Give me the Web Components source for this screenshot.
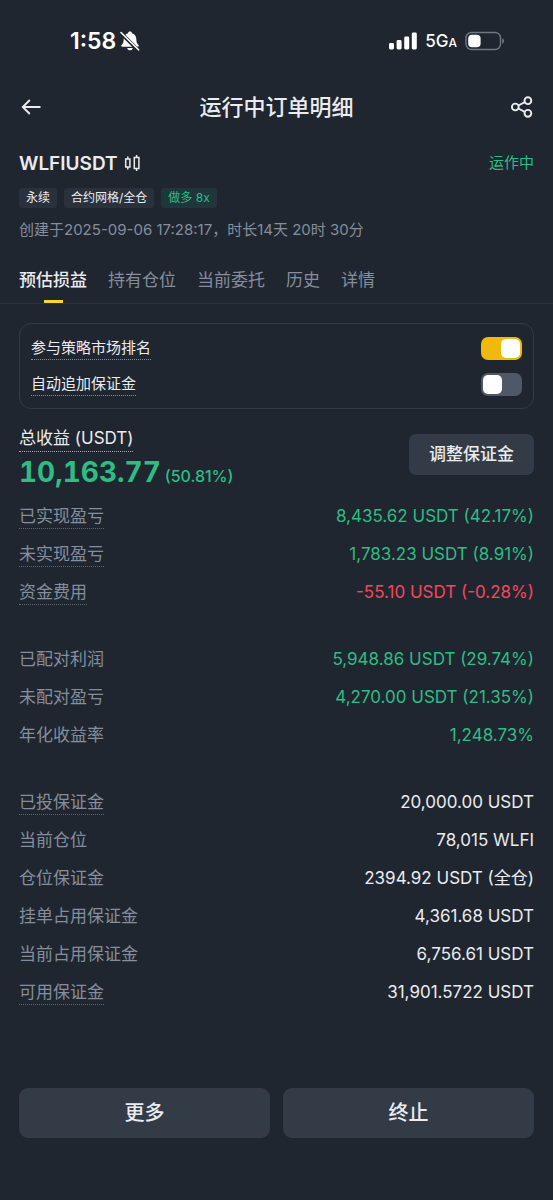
<!DOCTYPE html>
<html lang="zh-CN">
<head>
<meta charset="utf-8">
<meta name="viewport" content="width=device-width, initial-scale=1">
<title>运行中订单明细</title>
<style>
  body {
    margin: 0;
    background: #202630;
  }
</style>
</head>
<body>
<order-page></order-page>

<script>
class BaseElement extends HTMLElement {
  connectedCallback() {
    if (this.shadowRoot) return;
    this.shadow = this.attachShadow({ mode: 'open' });
    this.shadow.innerHTML = `<style>* { box-sizing: border-box; } ${this.css()}</style>${this.html()}`;
  }
}

class StatusBar extends BaseElement {
  html() {
    return `
      <div class="side clock">
        <span class="time">1:58</span>
        <svg width="20" height="20" viewBox="0 0 20 20" aria-hidden="true">
          <path d="M10 .6C8.900 .6 8.100 1.300 8 2.200C5.300 3 3.700 5.300 3.700 8C3.700 11.300 3 12.500 1.500 14C.9 14.700 1.200 15.800 2.300 15.800H17.700C18.800 15.800 19.100 14.700 18.500 14C17 12.500 16.300 11.300 16.300 8C16.300 5.300 14.700 3 12 2.200C11.900 1.300 11.100 .6 10 .6Z" fill="#fff"/>
          <path d="M7.200 17H12.800C12.500 18.500 11.400 19.300 10 19.300C8.600 19.300 7.500 18.500 7.200 17Z" fill="#fff"/>
          <path d="M.5 1.500L18 19" stroke="#202630" stroke-width="3.800"/>
          <path d="M1 1.500L18.700 18.900" stroke="#fff" stroke-width="1.500" stroke-linecap="round"/>
        </svg>
      </div>
      <div class="side">
        <svg width="28" height="18" viewBox="0 0 28 18" fill="#fff" aria-hidden="true">
          <rect x="0" y="11" width="5" height="6.500" rx="1.400"/>
          <rect x="7.600" y="8" width="5" height="9.500" rx="1.400"/>
          <rect x="15.200" y="4.500" width="5" height="13" rx="1.400"/>
          <rect x="22.800" y="0.500" width="5" height="17" rx="1.400"/>
        </svg>
        <span class="net">5G<small>A</small></span>
        <svg width="40" height="20" viewBox="0 0 40 20" aria-hidden="true">
          <rect x="1" y="1.500" width="34.500" height="17" rx="5.500" fill="none" stroke="#717780" stroke-width="1.400"/>
          <rect x="3.200" y="3.800" width="12.400" height="12.400" rx="3.800" fill="#fff"/>
          <path d="M37.200 7.200C39.600 8.300 39.600 11.700 37.200 12.800Z" fill="#717780"/>
        </svg>
      </div>`;
  }

  css() {
    return `
      :host {
        display: flex;
        justify-content: space-between;
        height: 82px;
        padding: 0 48px 0 70px;
        color: #fff;
      }
      .side { display: flex; align-items: center; gap: 8px; }
      .clock { gap: 4px; }
      .time { font-size: 23px; font-weight: 600; }
      .net { font-size: 17px; font-weight: 500; }
      small { font-size: 12px; }
    `;
  }
}

class PageHeader extends BaseElement {
  html() {
    return `
      <button aria-label="返回">
        <svg width="24" height="24" viewBox="0 0 24 24">
          <path d="M21.500 12H3.800M10.800 5L3.800 12L10.800 19" stroke-width="1.900"/>
        </svg>
      </button>
      <h1><slot></slot></h1>
      <button aria-label="分享">
        <svg width="24" height="24" viewBox="0 0 24 24">
          <g stroke-width="1.900">
            <circle cx="5.300" cy="12" r="3.400"/>
            <circle cx="17.900" cy="5.700" r="3.400"/>
            <circle cx="17.900" cy="18.300" r="3.400"/>
            <path d="M8.400 10.500L14.800 7.200M8.400 13.500L14.800 16.800"/>
          </g>
        </svg>
      </button>`;
  }

  css() {
    return `
      :host {
        display: flex;
        align-items: center;
        justify-content: space-between;
        height: 50px;
        padding: 0 19px;
      }
      h1 { margin: 0; font-size: 22px; font-weight: 500; line-height: 32px; }
      button {
        display: flex;
        padding: 0;
        border: 0;
        background: none;
        color: inherit;
      }
      svg { fill: none; stroke: currentColor; }
    `;
  }
}

class OrderTag extends BaseElement {
  html() {
    return `<slot></slot>`;
  }

  css() {
    return `
      :host {
        display: block;
        padding: 0 7px;
        border-radius: 3px;
        background: #29313d;
        font-size: 12px;
        line-height: 20px;
      }
      :host([side="long"]) { background: #20363b; color: #2ebd85; }
    `;
  }
}

class OrderSummary extends BaseElement {
  html() {
    return `
      <div class="top">
        <h2>WLFIUSDT</h2>
        <svg width="18" height="18" viewBox="0 0 18 18" aria-hidden="true">
          <g fill="none" stroke="currentColor" stroke-width="1.500">
            <rect x="1.700" y="5" width="4.200" height="8"/>
            <path d="M3.800 2.500V5M3.800 13V15.500"/>
            <rect x="10.300" y="3.500" width="4.600" height="11"/>
            <path d="M12.600 1V3.500M12.600 14.500V17"/>
          </g>
        </svg>
        <span class="state">运作中</span>
      </div>
      <div class="tags">
        <order-tag>永续</order-tag>
        <order-tag>合约网格/全仓</order-tag>
        <order-tag side="long">做多 8x</order-tag>
      </div>
      <p>创建于2025-09-06 17:28:17，时长14天 20时 30分</p>`;
  }

  css() {
    return `
      :host { display: block; padding: 19px 19px 0; }
      .top { display: flex; align-items: center; gap: 6px; height: 24px; }
      h2 { margin: 0; font-size: 19px; font-weight: 600; }
      .state { margin-left: auto; color: #2ebd85; font-size: 15px; line-height: 22px; }
      .tags { display: flex; gap: 7px; margin-top: 13px; }
      p { margin: 10px 0 0; color: #848e9c; font-size: 15px; line-height: 24px; }
    `;
  }
}

class TabBar extends BaseElement {
  html() {
    const tabs = ['预估损益', '持有仓位', '当前委托', '历史', '详情'];
    return `<div role="tablist">${tabs
      .map((name, i) => `<button role="tab" aria-selected="${i === 0}">${name}</button>`)
      .join('')}</div>`;
  }

  connectedCallback() {
    super.connectedCallback();
    const buttons = [...this.shadow.querySelectorAll('button')];
    buttons.forEach((button) => {
      button.addEventListener('click', () => {
        buttons.forEach((b) => b.setAttribute('aria-selected', b === button));
      });
    });
  }

  css() {
    return `
      :host { display: block; padding: 14px 19px 0; border-bottom: 1px solid #2b333e; }
      div { display: flex; gap: 21px; }
      button {
        display: flex;
        flex-direction: column;
        align-items: center;
        justify-content: space-between;
        height: 47px;
        padding: 12px 0 0;
        border: 0;
        background: none;
        color: #848e9c;
        font: inherit;
        font-size: 17px;
        line-height: 24px;
      }
      button::after { content: ''; width: 19px; height: 3px; }
      [aria-selected="true"] { color: #eaecef; font-weight: 500; }
      [aria-selected="true"]::after { background: #fcd535; }
    `;
  }
}

class SwitchRow extends BaseElement {
  html() {
    return `
      <label for="toggle">${this.getAttribute('label')}</label>
      <input id="toggle" type="checkbox" role="switch" ${this.hasAttribute('checked') ? 'checked' : ''}>`;
  }

  css() {
    return `
      :host { display: flex; align-items: center; justify-content: space-between; height: 36px; }
      label { border-bottom: 1px dotted #848e9c; font-size: 15px; line-height: 22px; }
      input {
        appearance: none;
        display: flex;
        width: 41px;
        height: 23px;
        margin: 0;
        padding: 2px;
        border-radius: 7px;
        background: #4f5867;
      }
      input::before {
        content: '';
        width: 19px;
        height: 19px;
        border-radius: 5px;
        background: #fff;
      }
      input:checked { justify-content: flex-end; background: #f0b90b; }
    `;
  }
}

class ActionButton extends BaseElement {
  html() {
    return `<button><slot></slot></button>`;
  }

  css() {
    return `
      :host { display: block; }
      button {
        width: 100%;
        padding: 8px 20px;
        border: 0;
        border-radius: 7px;
        background: #333b47;
        color: inherit;
        font: inherit;
        font-size: 17px;
        font-weight: 500;
        line-height: 25px;
      }
      :host([large]) button { padding: 12px; border-radius: 9px; font-size: 20px; line-height: 26px; }
    `;
  }
}

class TotalProfit extends BaseElement {
  html() {
    return `
      <div>
        <span class="label">总收益 (USDT)</span>
        <div class="amount"><strong>10,163.77</strong><span>(50.81%)</span></div>
      </div>
      <action-button>调整保证金</action-button>`;
  }

  css() {
    return `
      :host { display: flex; align-items: flex-start; justify-content: space-between; margin-top: 16px; }
      action-button { margin-top: 9px; }
      .label {
        display: block;
        width: fit-content;
        border-bottom: 1px dotted #a5abb3;
        font-size: 17px;
        line-height: 26px;
      }
      .amount { display: flex; align-items: baseline; gap: 4px; color: #2ebd85; line-height: 20px; }
      strong { font-size: 28px; font-weight: 700; font-variant-numeric: tabular-nums; line-height: 40px; }
      .amount span { font-size: 16px; font-weight: 500; }
    `;
  }
}

class DetailRow extends BaseElement {
  html() {
    return `<span class="label">${this.getAttribute('label')}</span><slot></slot>`;
  }

  css() {
    return `
      :host {
        display: flex;
        align-items: center;
        justify-content: space-between;
        height: 38px;
        font-size: 17px;
        line-height: 24px;
      }
      :host([trend="up"]) { color: #2ebd85; }
      :host([trend="down"]) { color: #f6465d; }
      .label { border-bottom: 1px dotted transparent; color: #848e9c; }
      :host([hint]) .label { border-color: #5e6673; }
    `;
  }
}

class OrderPage extends BaseElement {
  html() {
    return `
      <status-bar></status-bar>
      <page-header>运行中订单明细</page-header>
      <order-summary></order-summary>
      <tab-bar></tab-bar>
      <main>
        <section class="card">
          <switch-row label="参与策略市场排名" checked></switch-row>
          <switch-row label="自动追加保证金"></switch-row>
        </section>
        <total-profit></total-profit>
        <section class="details">
          <div>
            <detail-row label="已实现盈亏" trend="up" hint>8,435.62 USDT (42.17%)</detail-row>
            <detail-row label="未实现盈亏" trend="up" hint>1,783.23 USDT (8.91%)</detail-row>
            <detail-row label="资金费用" trend="down" hint>-55.10 USDT (-0.28%)</detail-row>
          </div>
          <div>
            <detail-row label="已配对利润" trend="up">5,948.86 USDT (29.74%)</detail-row>
            <detail-row label="未配对盈亏" trend="up">4,270.00 USDT (21.35%)</detail-row>
            <detail-row label="年化收益率" trend="up">1,248.73%</detail-row>
          </div>
          <div>
            <detail-row label="已投保证金" hint>20,000.00 USDT</detail-row>
            <detail-row label="当前仓位">78,015 WLFI</detail-row>
            <detail-row label="仓位保证金">2394.92 USDT (全仓)</detail-row>
            <detail-row label="挂单占用保证金">4,361.68 USDT</detail-row>
            <detail-row label="当前占用保证金">6,756.61 USDT</detail-row>
            <detail-row label="可用保证金" hint>31,901.5722 USDT</detail-row>
          </div>
        </section>
      </main>
      <footer>
        <action-button large>更多</action-button>
        <action-button large>终止</action-button>
      </footer>`;
  }

  css() {
    return `
      :host {
        display: flex;
        flex-direction: column;
        min-height: 100vh;
        background: #202630;
        color: #eaecef;
        font-family: Inter, "Noto Sans CJK SC", sans-serif;
      }
      main { padding: 19px 19px 0; }
      .card { padding: 6px 11px; border: 1px solid #333b47; border-radius: 12px; }
      .details { display: flex; flex-direction: column; gap: 29px; margin-top: 5px; }
      footer { display: flex; gap: 13px; margin-top: auto; padding: 48px 19px 62px; }
      footer action-button { flex: 1; }
    `;
  }
}

window.customElements.define('status-bar', StatusBar);
window.customElements.define('page-header', PageHeader);
window.customElements.define('order-tag', OrderTag);
window.customElements.define('order-summary', OrderSummary);
window.customElements.define('tab-bar', TabBar);
window.customElements.define('switch-row', SwitchRow);
window.customElements.define('action-button', ActionButton);
window.customElements.define('total-profit', TotalProfit);
window.customElements.define('detail-row', DetailRow);
window.customElements.define('order-page', OrderPage);
</script>
</body>
</html>
